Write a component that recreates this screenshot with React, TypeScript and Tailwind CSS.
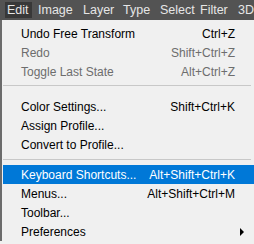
type Item = {
  label: string;
  shortcut?: string;
  disabled?: boolean;
  active?: boolean;
  submenu?: boolean;
};

// menu bar labels with the width each one takes in the bar
const BAR: { name: string; w: string }[] = [
  { name: "Edit", w: "w-[33px]" },
  { name: "Image", w: "w-[45px]" },
  { name: "Layer", w: "w-[40px]" },
  { name: "Type", w: "w-[37px]" },
  { name: "Select", w: "w-[40px]" },
  { name: "Filter", w: "w-[38px]" },
  { name: "3D", w: "w-[30px]" },
];

const GROUPS: Item[][] = [
  [
    { label: "Undo Free Transform", shortcut: "Ctrl+Z" },
    { label: "Redo", shortcut: "Shift+Ctrl+Z", disabled: true },
    { label: "Toggle Last State", shortcut: "Alt+Ctrl+Z", disabled: true },
  ],
  [
    { label: "Color Settings...", shortcut: "Shift+Ctrl+K" },
    { label: "Assign Profile..." },
    { label: "Convert to Profile..." },
  ],
  [
    { label: "Keyboard Shortcuts...", shortcut: "Alt+Shift+Ctrl+K", active: true },
    { label: "Menus...", shortcut: "Alt+Shift+Ctrl+M" },
    { label: "Toolbar..." },
    { label: "Preferences", submenu: true },
  ],
];

function Row({ item }: { item: Item }) {
  const tone = item.active
    ? "bg-[#0078d7] text-white"
    : item.disabled
      ? "text-[#6d6d6d]"
      : "text-black";
  return (
    <div className={`flex h-[19px] items-center pl-[18px] pr-[19px] ${tone}`}>
      <span className="flex-1">{item.label}</span>
      {item.shortcut && <span>{item.shortcut}</span>}
      {item.submenu && (
        <svg width="5" height="8" viewBox="0 0 5 8" className="-mr-[10px]">
          <path d="M0 0 L4 4 L0 8 Z" fill="#000" />
        </svg>
      )}
    </div>
  );
}

export default function App() {
  return (
    <div className="h-[244px] w-[254px] overflow-hidden bg-[#f0f0f0] font-['Segoe_UI','Liberation_Sans',sans-serif] text-[12px] leading-none">
      <div className="flex h-[20px] items-center overflow-hidden whitespace-nowrap bg-[#535353] pl-[5px] text-[12.5px] text-[#e6e6e6]">
        {BAR.map((b) => (
          <span key={b.name} className={`shrink-0 ${b.w}`}>
            {b.name === "Edit" ? (
              <span className="flex h-[16px] w-[27px] items-center bg-[#383838] pl-[2px]">
                {b.name}
              </span>
            ) : (
              b.name
            )}
          </span>
        ))}
      </div>

      <div className="border-l-2 border-[#6b6b6b] pl-px pt-[4px] whitespace-nowrap">
        {GROUPS.map((group, gi) => (
          <div key={gi}>
            {gi === 1 && (
              <div className="flex h-[16px] flex-col pt-[4px]">
                <div className="mr-[3px] h-px bg-[#c8c8c8]" />
              </div>
            )}
            {gi === 2 && (
              <div className="flex h-[11px] flex-col pt-[5px]">
                <div className="mr-[3px] h-px bg-[#c8c8c8]" />
              </div>
            )}
            {group.map((item) => (
              <Row key={item.label} item={item} />
            ))}
          </div>
        ))}
      </div>
    </div>
  );
}
